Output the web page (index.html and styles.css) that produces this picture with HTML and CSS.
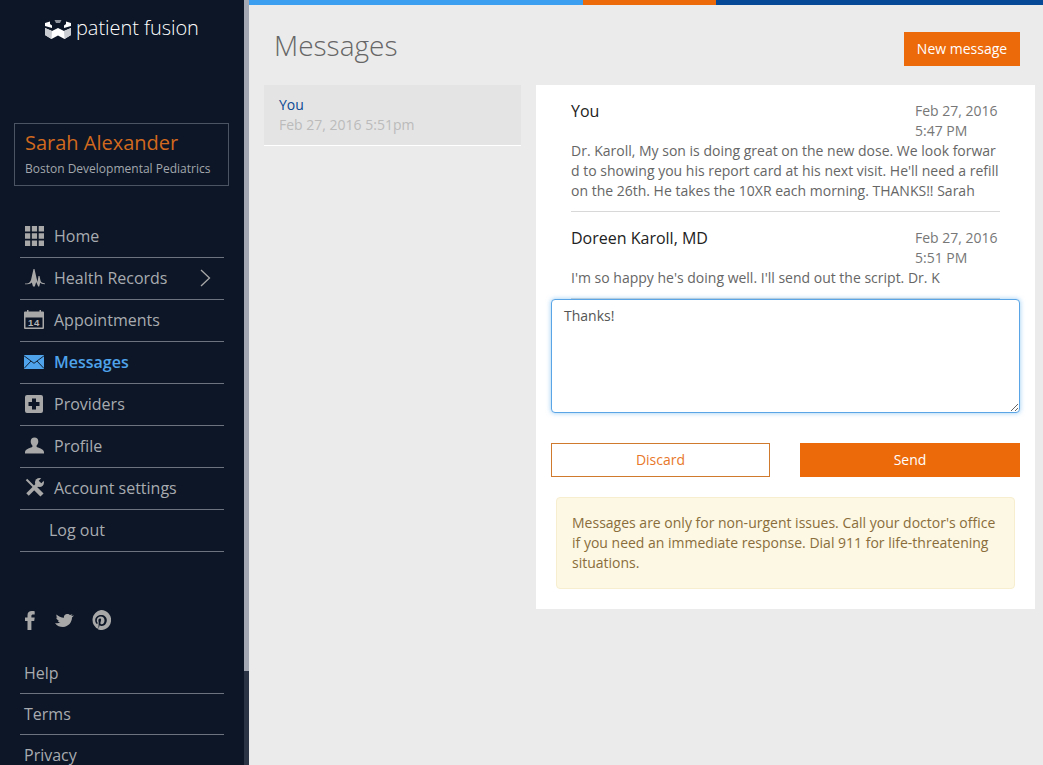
FILE: index.html
```html
<!DOCTYPE html>
<html lang="en">
<head>
<meta charset="utf-8">
<title>Messages</title>
<link rel="stylesheet" href="styles.css">
</head>
<body>
<div class="app">
  <aside class="sidebar">
    <div class="sidebar-inner">
      <div class="logo">
        <svg class="logo-mark" width="26" height="19" viewBox="0 0 26 19"><path fill="#8f949c" d="M9.500 0h7l-1.500 3h-4z"/><path fill="#fff" d="M0 3l5-1.500v2.500l2 1.500V8L0 6zM26 3l-5-1.500v2.500l-2 1.500V8l7-2zM0 8l7 3 6-3 6 3 7-3v7l-6.500 4-6.500-3.500L6.500 19 0 15z"/><path fill="#c9ccd1" d="M7 11l-.5 8L0 15V8zM19 11l.5 8 6.500-4V8z"/></svg>
        <span class="logo-text">patient fusion</span>
      </div>
      <div class="user-card">
        <div class="user-name">Sarah Alexander</div>
        <div class="user-org">Boston Developmental Pediatrics</div>
      </div>
      <nav class="nav">
        <a class="nav-item"><span class="nav-icon"><svg width="19" height="20" viewBox="0 0 20 20" preserveAspectRatio="none" fill="#a8a8a8"><path d="M0 0h5.500v5.500H0zM7.200 0h5.500v5.500H7.200zM14.400 0H20v5.500h-5.600zM0 7.300h5.500v5.400H0zM7.200 7.300h5.500v5.400H7.200zM14.400 7.300H20v5.400h-5.600zM0 14.500h5.500V20H0zM7.200 14.500h5.500V20H7.200zM14.400 14.500H20V20h-5.600z"/></svg></span>Home</a>
        <a class="nav-item"><span class="nav-icon"><svg width="20" height="19" viewBox="0 0 20 19"><path fill="#a8a8a8" d="M0 15.500C3 15.500 5 15 6 12L8.500 1h1l2 9 1 4 1-6h1l1 4.500c.5 2 1.500 2.500 4.500 3v.7c-3-.2-4-.5-4.800-1.400l-1 3.700h-1l-2-4.500-1.400 4.500H8l-1.200-4c-1.300 1.500-3.800 1.800-6.800 1.800z"/></svg></span>Health Records<svg class="nav-chevron" width="11" height="18" viewBox="0 0 11 18" fill="none" stroke="#a8a8a8" stroke-width="1.300"><path d="M1 1l8.500 8L1 17"/></svg></a>
        <a class="nav-item"><span class="nav-icon icon-shift"><svg width="20" height="19" viewBox="0 0 20 19"><path fill="#a8a8a8" d="M1 1.500h2V0h1.500v1.500h11V0H17v1.500h2a1 1 0 0 1 1 1V18a1 1 0 0 1-1 1H1a1 1 0 0 1-1-1V2.500a1 1 0 0 1 1-1z"/><rect x="1.500" y="7.500" width="17" height="10" fill="#0c1626"/><text x="10" y="16" text-anchor="middle" class="cal-day">14</text></svg></span>Appointments</a>
        <a class="nav-item is-active"><span class="nav-icon icon-shift"><svg width="20" height="14" viewBox="0 0 20 14"><rect width="20" height="14" fill="#4fa3ea"/><path fill="none" stroke="#0c1626" stroke-width=".9" d="M0 .8l10 7.500L20 .8M0 13.500l7-7.500M20 13.500L13 6"/></svg></span>Messages</a>
        <a class="nav-item"><span class="nav-icon"><svg width="18" height="18" viewBox="0 0 18 18"><path fill="#a8a8a8" fill-rule="evenodd" d="M2 0h14a2 2 0 0 1 2 2v14a2 2 0 0 1-2 2H2a2 2 0 0 1-2-2V2a2 2 0 0 1 2-2zM7 3.500V7H3.500v4H7v3.500h4V11h3.500V7H11V3.500z"/></svg></span>Providers</a>
        <a class="nav-item"><span class="nav-icon"><svg width="19" height="17" viewBox="0 0 20 17"><path fill="#a8a8a8" d="M10 0c2.500 0 4 1.700 4 4.200 0 1.800-.8 3.300-1.800 4.200v1.300c1 1.200 7.800 1.800 7.800 5.800V17H0v-1.500c0-4 6.800-4.600 7.800-5.800V8.400C6.800 7.500 6 6 6 4.200 6 1.700 7.500 0 10 0z"/></svg></span>Profile</a>
        <a class="nav-item"><span class="nav-icon"><svg width="19" height="19" viewBox="0 0 19 19" fill="none" stroke="#a8a8a8"><path stroke-width="2" d="M1.500 1.500L9 9"/><path stroke-width="4.500" d="M10 10l7 7"/><path stroke-width="3.600" d="M2.500 16.500L12 7"/><circle cx="14.500" cy="4.500" r="4.500" fill="#a8a8a8" stroke="none"/><path fill="#0c1626" stroke="none" d="M13.700 2.700l2.600 2.600 4-4-2.600-2.600z"/></svg></span>Account settings</a>
        <a class="nav-item nav-item-plain">Log out</a>
      </nav>
      <div class="social">
        <svg class="soc-f" width="10" height="19" viewBox="0 0 10 19" fill="#a8a8a8"><path d="M2.500 19V10H0V6.500h2.500V4.300C2.500 1.300 4.200 0 6.800 0 8 0 9.200.1 9.700.2V3.500H8.200C6.900 3.500 6.400 4 6.400 5v1.500h3.300L9.200 10H6.400v9z"/></svg>
        <svg class="soc-t" width="19" height="13" viewBox="0 0 19 13" fill="#a8a8a8"><path d="M0 9c2 .5 4 .3 5.500-.5-1.500 0-2.500-1-2.800-1.800H4C2.500 6 1.500 5 1 3.500L2.500 4C1.500 3 1.200 1.500 1.500.5 3.500 2.500 6 3.500 9 3.700 8.500 1.500 10.500 0 12.500 0c1 0 2 .5 2.500 1l2.500-.8L16.200 2 19 1.600l-2 2c0 4.500-3.500 9.400-9 9.400-3 0-6-1-8-4z"/></svg>
        <svg class="soc-p" width="20" height="20" viewBox="0 0 20 20"><path fill="#a8a8a8" fill-rule="evenodd" d="M10 0a10 10 0 1 1-3 19.500c.4-.7.900-1.600 1.100-2.400l.6-2.200c.3.600 1.200 1.100 2.200 1.100 2.900 0 4.900-2.600 4.900-5.900 0-3-2.500-5.100-5.600-5.100-3.900 0-6 2.600-6 5.400 0 1.300.7 3 1.800 3.500.2.100.3 0 .4-.2l.2-1c0-.1 0-.2-.1-.3-.4-.4-.7-1.200-.7-2 0-2 1.500-3.800 4-3.800 2.200 0 3.700 1.500 3.700 3.600 0 2.400-1.200 4.100-2.800 4.100-.9 0-1.500-.7-1.300-1.600.2-1 .7-2.100.7-2.900 0-.7-.4-1.200-1.100-1.200-.9 0-1.600.9-1.600 2.100 0 .8.300 1.300.3 1.300L7.600 16c-.2.900-.1 2.200 0 3.100A10 10 0 0 1 10 0z"/></svg>
      </div>
      <div class="foot-links">
        <a class="foot-link">Help</a>
        <a class="foot-link">Terms</a>
        <a class="foot-link">Privacy</a>
      </div>
    </div>
    <div class="scrollbar"><div class="scroll-thumb"></div></div>
  </aside>
  <main class="main">
    <div class="progress"><span class="seg seg-blue"></span><span class="seg seg-orange"></span><span class="seg seg-navy"></span></div>
    <header class="page-head">
      <h1 class="page-title">Messages</h1>
      <button class="btn-new">New message</button>
    </header>
    <div class="columns">
      <section class="list">
        <div class="list-item">
          <div class="list-name">You</div>
          <div class="list-date">Feb 27, 2016 5:51pm</div>
        </div>
      </section>
      <section class="panel">
        <div class="thread">
          <article class="msg">
            <div class="msg-head"><div class="msg-author">You</div><div class="msg-date">Feb 27, 2016<br>5:47 PM</div></div>
            <p class="msg-body">Dr. Karoll, My son is doing great on the new dose. We look forward to showing you his report card at his next visit. He'll need a refill on the 26th. He takes the 10XR each morning. THANKS!! Sarah</p>
          </article>
          <article class="msg">
            <div class="msg-head"><div class="msg-author">Doreen Karoll, MD</div><div class="msg-date">Feb 27, 2016<br>5:51 PM</div></div>
            <p class="msg-body">I'm so happy he's doing well. I'll send out the script. Dr. K</p>
          </article>
        </div>
        <textarea class="reply">Thanks!</textarea>
        <div class="actions">
          <button class="btn btn-outline">Discard</button>
          <button class="btn btn-solid">Send</button>
        </div>
        <div class="notice">Messages are only for non-urgent issues. Call your doctor's office if you need an immediate response. Dial 911 for life-threatening situations.</div>
      </section>
    </div>
  </main>
</div>
</body>
</html>
```
FILE: styles.css
```css
* { box-sizing: border-box; }
html, body { margin: 0; height: 100%; overflow: hidden; }
body { font-family: "Open Sans", "Liberation Sans", sans-serif; font-size: 14px; background: #ebebeb; color: #666; }
.app { display: flex; height: 765px; width: 1043px; overflow: hidden; }

.sidebar { width: 249px; flex: none; display: flex; background: #0c1626; height: 765px; overflow: hidden; }
.sidebar-inner { width: 244px; flex: none; padding: 0 15px 0 14px; overflow: hidden; }
.scrollbar { width: 5px; background: #2b3444; }
.scroll-thumb { height: 671px; background: #a3a8b3; }

.logo { display: flex; align-items: center; gap: 5px; height: 56px; padding-left: 31px; }
.logo-mark { flex: none; margin-top: 3px; }
.logo-text { font-family: "Open Sans", sans-serif; font-weight: 300; font-size: 20px; line-height: 24px; letter-spacing: -.05px; color: #fff; white-space: nowrap; }

.user-card { margin-top: 67px; height: 63px; width: 215px; border: 1px solid #4b5462; padding: 6px 10px; }
.user-name { font-size: 20px; line-height: 26px; color: #d2691e; }
.user-org { font-size: 12px; line-height: 18px; margin-top: 4px; color: #a3a7ad; }

.nav { margin: 30px 0 0 6px; width: 204px; }
.nav-item { display: flex; align-items: center; height: 42px; padding-bottom: 2px; border-bottom: 1px solid #6d7480; font-size: 16px; color: #a8abb0; }
.nav-item.is-active { color: #4fa3ea; font-weight: 600; }
.nav-item-plain { padding-left: 29px; }
.nav-icon { width: 34px; flex: none; display: flex; align-items: center; padding-left: 5px; height: 24px; }
.nav-icon.icon-shift { padding-left: 4px; }
.nav-chevron { margin-left: auto; margin-right: 13px; }
.cal-day { font-family: "Liberation Sans", sans-serif; font-size: 9.500px; font-weight: 700; letter-spacing: .6px; fill: #b5b5b5; }

.social { display: flex; align-items: center; margin: 58px 0 0 11px; height: 20px; }
.soc-t { margin-left: 20px; }
.soc-p { margin-left: 17px; }
.foot-links { margin: 23px 0 0 6px; width: 204px; }
.foot-link { display: flex; align-items: center; height: 41px; border-bottom: 1px solid #6d7480; font-size: 16px; color: #a8abb0; padding-left: 4px; }
.foot-link:last-child { border-bottom-color: transparent; }

.main { flex: 1; min-width: 0; display: flex; flex-direction: column; }
.progress { display: flex; height: 5px; flex: none; }
.seg-blue { width: 334px; background: #3d9fef; }
.seg-orange { width: 133px; background: #ed6a0a; }
.seg-navy { flex: 1; background: #064a97; }

.page-head { display: flex; justify-content: space-between; align-items: flex-start; height: 80px; padding: 25px 23px 0 25px; }
.page-title { margin: 0; font-size: 28px; font-weight: 300; line-height: 30px; color: #666; }
.btn-new { height: 34px; width: 116px; margin-top: 2px; padding: 0 0 2px; border: 0; background: #ed6a0a; color: #fff; font: 400 14px "Open Sans", sans-serif; }

.columns { display: flex; align-items: flex-start; padding: 0 8px 0 15px; gap: 15px; }
.list { width: 257px; flex: none; }
.list-item { height: 61px; background: #e4e4e4; border-bottom: 1px solid #fff; padding: 10px 15px; line-height: 20px; }
.list-name { color: #0b4a94; }
.list-date { color: #bbb; }

.panel { flex: 1; background: #fff; height: 524px; padding: 0 15px; }
.thread { height: 214px; overflow: hidden; padding: 0 20px; }
.msg { border-bottom: 1px solid #d8d8d8; padding: 16px 0 10px; }
.msg-head { display: flex; justify-content: space-between; }
.msg-author { font-size: 16px; line-height: 20px; color: #222; }
.msg-date { width: 85px; flex: none; white-space: nowrap; line-height: 20px; color: #777; }
.msg-body { margin: 0; line-height: 20px; color: #666; word-break: break-all; }

.reply { display: block; width: 469px; height: 114px; resize: both; border: 1px solid #5aa5e6; border-radius: 4px; padding: 6px 12px; font: 14px/20px "Open Sans", sans-serif; color: #555; outline: 0; box-shadow: 0 0 5px rgba(82, 168, 236, .6); background: #fff; }
.actions { display: flex; justify-content: space-between; margin-top: 30px; }
.btn { height: 34px; width: 220px; padding: 0 0 2px; font: 400 14px "Open Sans", sans-serif; }
.btn-outline { width: 219px; background: #fff; border: 1px solid #cf7a2c; color: #e8772a; }
.btn-solid { background: #ed6a0a; border: 0; color: #fff; }
.notice { margin: 20px 5px 0; height: 92px; border: 1px solid #f7eed0; border-radius: 4px; background: #fcf8e3; color: #8a6d3b; padding: 15px; line-height: 20px; }
```
